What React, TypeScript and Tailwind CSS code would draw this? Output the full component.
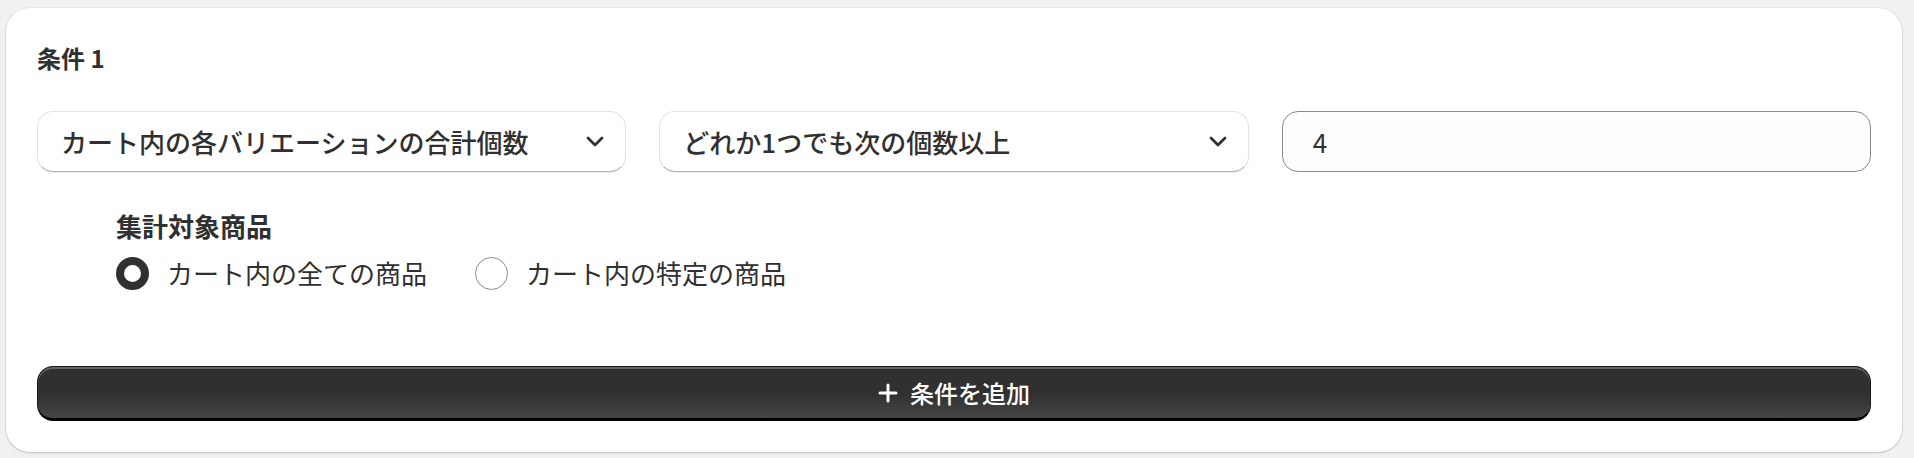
import React from "react";

const Chevron = () => (
	<svg width="18" height="11" viewBox="0 0 18 11" fill="none">
		<path
			d="M2 2l7 7 7-7"
			stroke="#303030"
			strokeWidth="2.8"
			strokeLinecap="round"
			strokeLinejoin="round"
		/>
	</svg>
);

const Select = ({ label }: { label: string }) => (
	<div className="h-[61px] flex items-center justify-between pl-[23px] pr-[21px] bg-white rounded-[16px] border border-[#e3e3e3] border-b-[#b5b5b5] shadow-[0_1px_0_rgba(0,0,0,0.08)]">
		<span className="text-[26px] font-medium text-[#303030] leading-none">{label}</span>
		<Chevron />
	</div>
);

const Radio = ({ checked, label }: { checked?: boolean; label: string }) => (
	<label className="flex items-center gap-[18px]">
		{checked ? (
			<span className="w-[33px] h-[33px] rounded-full border-[8px] border-[#303030] bg-white" />
		) : (
			<span className="w-[33px] h-[33px] rounded-full border border-[#8a8a8a] bg-white" />
		)}
		<span className="text-[26px] text-[#303030] leading-[36px]">{label}</span>
	</label>
);

const App = () => {
	return (
		<div
			className="w-full h-[458px] bg-[#f1f1f1] pt-[8px] pl-[6px] pr-[12px] pb-[6px]"
			style={{ fontFamily: '"Noto Sans CJK JP", "Noto Sans", sans-serif' }}
		>
			<div className="h-full bg-white rounded-[24px] shadow-[0_1px_2px_rgba(0,0,0,0.18),0_0_0_1px_rgba(0,0,0,0.04)] px-[31px] pt-[32px]">
				{/* title */}
				<div className="text-[24px] font-semibold text-[#303030] leading-[36px]">条件 1</div>

				{/* selects */}
				<div className="grid grid-cols-3 gap-[33px] mt-[35px]">
					<Select label="カート内の各バリエーションの合計個数" />
					<Select label="どれか1つでも次の個数以上" />
					<div className="h-[61px] flex items-center px-[30px] bg-[#fdfdfd] rounded-[16px] border border-[#8a8a8a]">
						<span className="text-[26px] text-[#303030] leading-none">4</span>
					</div>
				</div>

				{/* target */}
				<div className="ml-[79px] mt-[36px]">
					<div className="text-[26px] font-semibold text-[#303030] leading-[36px]">集計対象商品</div>
					<div className="flex items-center gap-[48px] mt-[11px]">
						<Radio checked label="カート内の全ての商品" />
						<Radio label="カート内の特定の商品" />
					</div>
				</div>

				{/* add button */}
				<button className="mt-[75px] w-full h-[55px] flex items-center justify-center gap-[12px] rounded-[16px] bg-gradient-to-b from-[#303030] via-[#303030] to-[#454545] border border-[#1a1a1a] border-b-[3px] border-b-black shadow-[inset_0_2px_0_rgba(255,255,255,0.25)] text-white">
					<svg width="20" height="20" viewBox="0 0 20 20" fill="none">
						<path d="M10 2v16M2 10h16" stroke="white" strokeWidth="3" strokeLinecap="round" />
					</svg>
					<span className="text-[24px] font-medium leading-none">条件を追加</span>
				</button>
			</div>
		</div>
	);
};

export default App;
